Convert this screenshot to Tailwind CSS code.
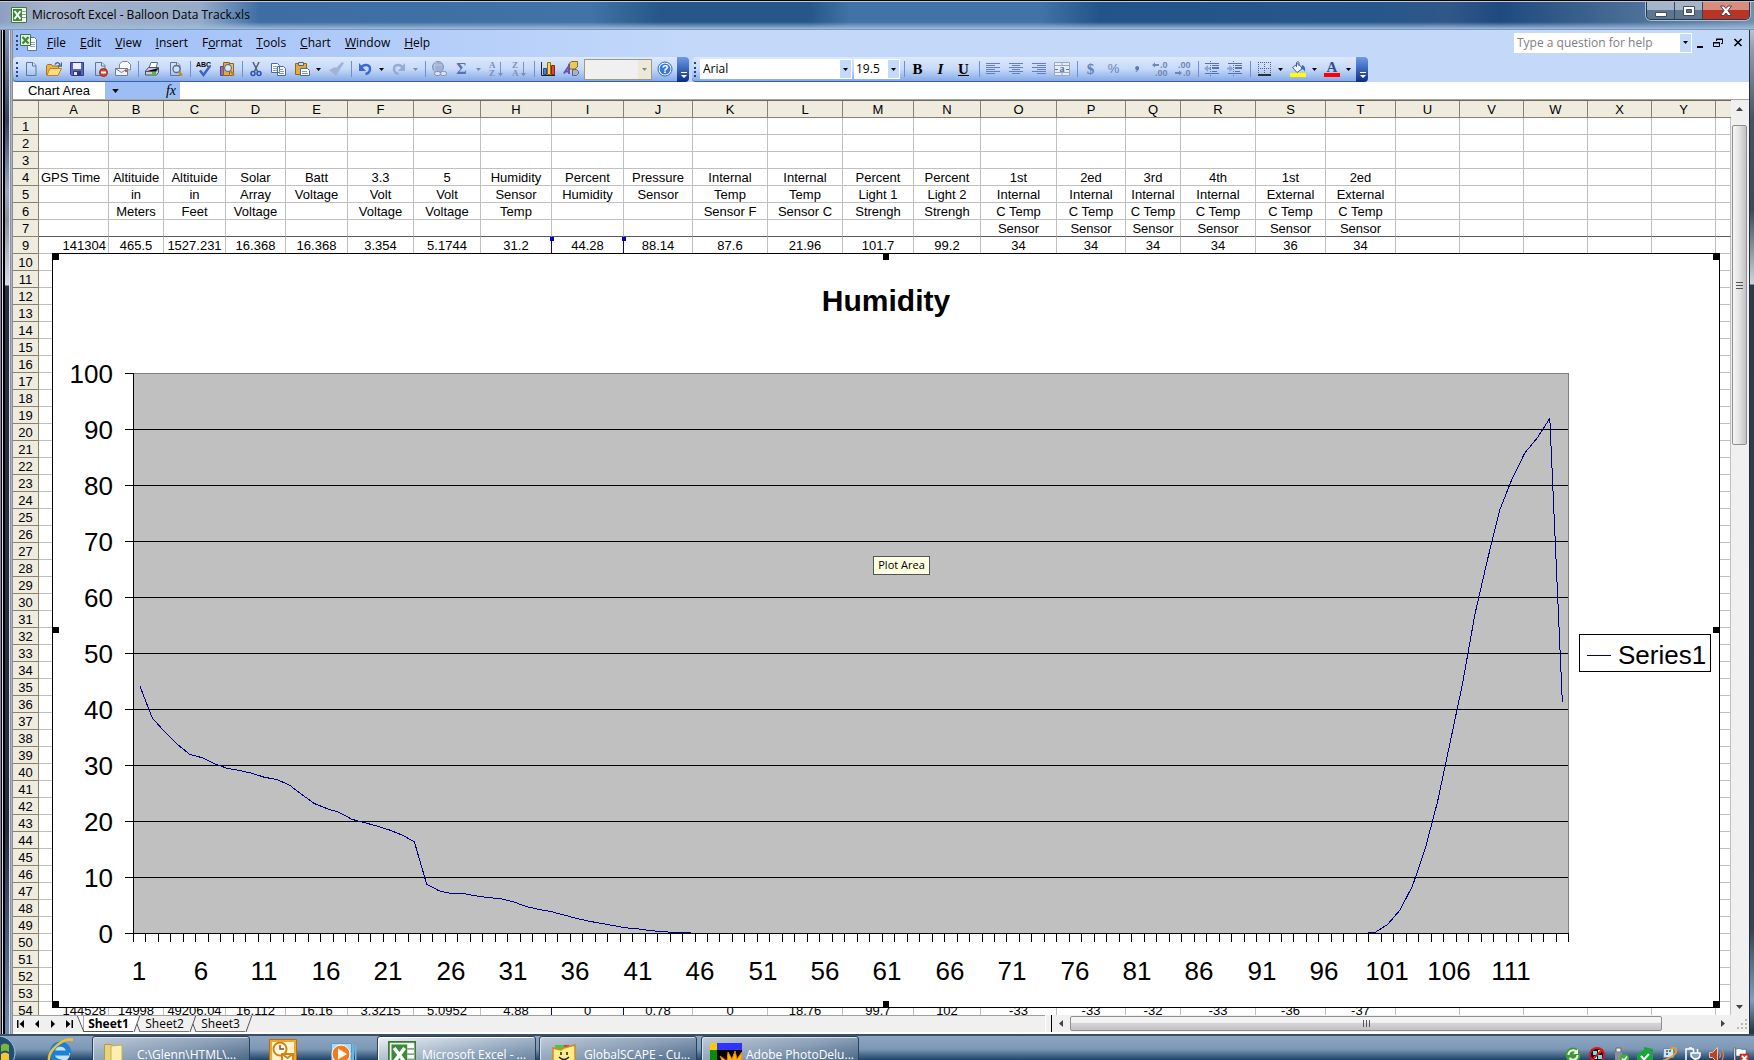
<!DOCTYPE html>
<html lang="en">
<head>
<meta charset="utf-8">
<title>Microsoft Excel - Balloon Data Track.xls</title>
<script src="https://cdn.jsdelivr.net/npm/@tailwindcss/browser@4"></script>
</head>
<body class="h-screen overflow-hidden bg-[#24486f] font-['Open_Sans','Noto_Sans',sans-serif] text-xs text-black">
<svg class="hidden" aria-hidden="true">
  <defs>
    <linearGradient id="sheetFill" x1="0" y1="0" x2="1" y2="1"><stop offset="0" stop-color="#fff"/><stop offset="1" stop-color="#c9d8f0"/></linearGradient>
    <symbol id="xl" viewBox="0 0 16 16"><path fill="#e9f3e6" stroke="#3c7a38" d="M.5.5h15v15H.5z"/><path fill="#fff" d="M10 2h5v12h-5z"/><path stroke="#7fae7b" d="M11 4.500h4M11 7.500h4M11 10.500h4"/><path fill="#3d8b3a" d="M2 2h9v12H2z"/><path stroke="#fff" stroke-width="2" d="M3.500 4l6 8M9.500 4l-6 8"/></symbol>
    <symbol id="caret" viewBox="0 0 5 3"><path d="M0 0h5L2.500 3z"/></symbol>
    <symbol id="page" viewBox="0 0 16 16"><path fill="url(#sheetFill)" stroke="#5f769f" d="M3.500 1.500h6.500l3 3v10h-9.500z"/><path fill="#dfe8f7" stroke="#5f769f" d="M9.500 1.500v3.500h3.500"/></symbol>
  </defs>
</svg>
<div class="flex h-full flex-col">
  <!-- Application window -->
  <div class="flex min-h-0 flex-1 flex-col border-t border-black">
    <header class="flex h-[29px] shrink-0 items-start justify-between border-t border-[#b9cfe4] bg-[linear-gradient(to_bottom,transparent_20px,#9dbbdc_27px,#5a7388_28px),linear-gradient(to_right,#8f9fc0_0,#a5b3ca_50px,#95abc9_200px,#3d6da3_260px,#4173a6_590px,#265788_660px,#265788_810px,#4173a6_850px,#4173a6_1040px,#235489_1100px,#27578a_1380px,#305788_1450px,#1e4a7e_1500px,#7290ae_100%)] pl-[11px]">
      <div class="flex h-[26px] items-center gap-[5px]">
        <svg class="size-4"><use href="#xl"/></svg>
        <h1 class="text-[12px] leading-4">Microsoft Excel - Balloon Data Track.xls</h1>
      </div>
      <div class="mr-1 flex h-[18px] overflow-hidden rounded-b-[5px] border border-t-0 border-[#26384e] shadow-[0_0_0_1px_#a9bfd4]">
        <button aria-label="Minimize" class="flex w-7 items-center justify-center border-r border-[#33465d] bg-linear-to-b from-[#a3b5c6] from-50% to-[#5e7791] to-50%"><svg class="h-4 w-4" viewBox="0 0 16 16"><path fill="#fff" stroke="#454c5c" d="M2.500 9.500h11v4h-11z"/></svg></button>
        <button aria-label="Maximize" class="flex w-7 items-center justify-center border-r border-[#33465d] bg-linear-to-b from-[#a3b5c6] from-50% to-[#5e7791] to-50%"><svg class="h-4 w-4" viewBox="0 0 16 16"><path fill="#fff" stroke="#454c5c" fill-rule="evenodd" d="M2.500 3.500h11v9h-11zM5.500 6.500h5v3h-5z"/></svg></button>
        <button aria-label="Close" class="flex w-[46px] items-center justify-center bg-linear-to-b from-[#d98c7e] from-50% to-[#b93422] to-50%"><svg class="h-4 w-4" viewBox="0 0 16 16"><path fill="#fff" stroke="#4c4450" d="M2.500 3h3.500l2 2.500L10 3h3.500L10 7.700 13.500 12.500H10L8 10 6 12.500H2.500L6 7.700z"/></svg></button>
      </div>
    </header>
    <div class="flex min-h-0 flex-1">
      <div class="w-[13px] shrink-0 bg-[linear-gradient(to_right,#889_1px,#0a0a10_1px,#0a0a10_2px,#dde_2px,#dde_3px,#000_3px,#000_5px,transparent_5px,transparent_9px,#dde6ee_9px,#dde6ee_10px,#555a66_10px,#c3c9d4_11px,#777a80_13px),linear-gradient(to_bottom,#7f94b4_0,#33415d_90px,#9aaac0_160px,#8b93a0_190px,#d9dce2_255px,#2a3044_256px,#262c40_800px,#6b89b0_1000px)]"></div>
      <div class="flex min-w-0 flex-1 flex-col">
        <!-- Menu bar -->
        <div class="flex h-[27px] shrink-0 items-center justify-between bg-linear-to-r from-[#9dbdf7] to-[#c4d9fa] to-40% pr-1 pb-[2px] pl-[3px]">
          <nav class="flex items-center">
            <span class="mr-[2px] h-[15px] border-l-2 border-dotted border-[#27418a]"></span>
            <svg class="mr-[2px] h-[18px] w-[18px]" viewBox="0 0 18 18"><path fill="#fff" stroke="#5f769f" d="M7.500 3.500h7l2 2v11h-9z"/><path stroke="#8ea6d0" d="M10 8.500h5M10 10.500h5M10 12.500h5"/><path fill="#e6f2e2" stroke="#3c7a38" d="M.5.500h10v11H.5z"/><path stroke="#3d8b3a" stroke-width="2.200" d="M2.500 3l6 6.500M8.500 3l-6 6.500"/></svg>
            <div class="flex">
              <button class="px-[7px]"><u>F</u>ile</button><button class="px-[7px]"><u>E</u>dit</button><button class="px-[7px]"><u>V</u>iew</button><button class="px-[7px]"><u>I</u>nsert</button><button class="px-[7px]">F<u>o</u>rmat</button><button class="px-[7px]"><u>T</u>ools</button><button class="px-[7px]"><u>C</u>hart</button><button class="px-[7px]"><u>W</u>indow</button><button class="px-[7px]"><u>H</u>elp</button>
            </div>
          </nav>
          <div class="flex items-center">
            <div class="flex h-5 w-[178px] items-stretch bg-white p-px"><input aria-label="Type a question for help" placeholder="Type a question for help" class="min-w-0 flex-1 pl-[2px] placeholder:text-[#808080]"><button aria-label="Show questions" class="flex w-[11px] items-center justify-center bg-[#c4dafa]"><svg class="h-[3px] w-[5px]"><use href="#caret"/></svg></button></div>
            <button aria-label="Minimize workbook" class="ml-[5px] w-3"><svg class="h-3 w-3" viewBox="0 0 12 12"><path fill="#000" d="M0 9h6v2H0z"/></svg></button>
            <button aria-label="Restore workbook" class="ml-1 w-3"><svg class="h-3 w-3" viewBox="0 0 12 12" fill="none" stroke="#000"><path d="M3.500 4V2.500h6v4H8M3 2h7M.5 5.500h6v4h-6zM0 6h7"/></svg></button>
            <button aria-label="Close workbook" class="ml-2 w-3"><svg class="h-3 w-3" viewBox="0 0 12 12"><path stroke="#000" stroke-width="1.600" d="M1.500 2l7 7M8.500 2l-7 7"/></svg></button>
          </div>
        </div>
        <!-- Toolbars -->
        <div class="flex h-[25px] shrink-0 bg-linear-to-r from-[#9dbdf7] to-[#c4d9fa] to-40%">
          <div class="flex items-center rounded-l-sm border-b border-[#3b61a6] bg-linear-to-b from-[#dde9fd] via-[#c6d9f8] to-[#86aae6] pr-px pl-[3px]" role="toolbar" aria-label="Standard">
            <span class="mr-px h-[15px] border-l-2 border-dotted border-[#27418a]"></span>
            <button aria-label="New" class="flex w-[23px] justify-center"><svg class="size-4"><use href="#page"/></svg></button>
            <button aria-label="Open" class="flex w-[23px] justify-center"><svg class="size-4" viewBox="0 0 16 16"><path fill="#e9b44c" stroke="#a8741a" d="M.5 14V4.500l1-1h4l1 1.500h6V8"/><path fill="#fbdc82" stroke="#b98425" d="M.8 14.500L4 7.500h11.500l-3.500 7z"/><path fill="none" stroke="#3f6291" stroke-width="1.300" d="M9 3.500C10.500 1 13 1 14 4M15.500 1.500V5H12"/></svg></button>
            <button aria-label="Save" class="flex w-[23px] justify-center"><svg class="size-4" viewBox="0 0 16 16"><path fill="#5a62c8" stroke="#343a8e" d="M1.500 1.500h13v13h-12l-1-1z"/><path fill="#eef1fb" d="M4 2h8v6H4z"/><path fill="#33386f" d="M4 10h8v4.500H4z"/><path fill="#e4e6f4" d="M5 11h3v3H5z"/></svg></button>
            <button aria-label="Permission" class="flex w-[23px] justify-center"><svg class="size-4"><use href="#page"/><circle cx="11.500" cy="11.500" r="4" fill="#d8432c" stroke="#9c2a18"/><path fill="#fff" d="M9 10.500h5v2H9z"/></svg></button>
            <button aria-label="E-mail" class="flex w-[23px] justify-center"><svg class="size-4" viewBox="0 0 16 16"><path fill="#fff" stroke="#7a89a8" d="M4.500 8V3l3-2.500h5l3 3V9z"/><path fill="#eef1f6" stroke="#6e7c99" d="M.5 7.500h12v7H.5z"/><path fill="none" stroke="#6e7c99" d="M.5 7.500l6 4 6-4"/><path fill="#d6542e" d="M10 9h2v2h-2z"/></svg></button>
            <span class="ml-1 mr-px h-4 border-l border-[#6d90cf]"></span>
            <button aria-label="Print" class="flex w-[23px] justify-center"><svg class="size-4" viewBox="0 0 16 16"><path fill="#fff" stroke="#5c6b88" d="M5 7l2-5.500h6.500L12 7z"/><path fill="#c9ced9" stroke="#4a5468" d="M1.500 10l3-3.500h10v5l-2 2.500h-11z"/><path stroke="#4a5468" d="M1.500 10.500h10.500l2.500-3.500"/><path fill="#49c23a" d="M8 11h4v3H8z"/></svg></button>
            <button aria-label="Print Preview" class="flex w-[23px] justify-center"><svg class="size-4"><use href="#page"/><circle cx="9.500" cy="8" r="3.500" fill="#cfe2f7" stroke="#5b6a80" stroke-width="1.300"/><path stroke="#c88928" stroke-width="2.500" d="M12 11l3 3.500"/></svg></button>
            <span class="ml-1 mr-px h-4 border-l border-[#6d90cf]"></span>
            <button aria-label="Spelling" class="flex w-[23px] justify-center"><svg class="size-4 overflow-visible" viewBox="0 0 16 16"><text x="0" y="6" font-family="Liberation Sans" font-size="7" font-weight="700">ABC</text><path fill="none" stroke="#3c63c4" stroke-width="2.500" d="M4 9.500l3.500 4.500L14 5"/></svg></button>
            <button aria-label="Research" class="flex w-[23px] justify-center"><svg class="size-4" viewBox="0 0 16 16"><path fill="#8b6cc6" stroke="#574089" d="M1.500 5.500h3v9h-3z"/><path fill="#dca94e" stroke="#8c6420" d="M4.500 1.500h6v13h-6z"/><path fill="#e4c47a" stroke="#8c6420" d="M10.500 2.500h4v12h-4z"/><circle cx="9" cy="7" r="3.500" fill="#d7e8fa" stroke="#51617c"/><path stroke="#c47f1e" stroke-width="2.500" d="M11.500 10l3.500 4.500"/></svg></button>
            <span class="ml-1 mr-px h-4 border-l border-[#6d90cf]"></span>
            <button aria-label="Cut" class="flex w-[23px] justify-center"><svg class="size-4" viewBox="0 0 16 16" fill="none"><path stroke="#4f5f7c" stroke-width="1.500" d="M5 1l4.500 9.500M11 1L6.500 10.500"/><circle cx="5" cy="12.500" r="2" stroke="#2b50b4" stroke-width="1.500"/><circle cx="11" cy="12.500" r="2" stroke="#2b50b4" stroke-width="1.500"/></svg></button>
            <button aria-label="Copy" class="flex w-[23px] justify-center"><svg class="size-4" viewBox="0 0 16 16"><path fill="#fff" stroke="#4969ab" d="M.5 2.500h6l2 2v7h-8zM6.500 5.500h6l2 2v7h-8z"/><path stroke="#7e9bd4" d="M2 5.500h4M2 7.500h4M2 9.500h4M8 8.500h4M8 10.500h5M8 12.500h5"/></svg></button>
            <button aria-label="Paste" class="flex w-[23px] justify-center"><svg class="size-4" viewBox="0 0 16 16"><path fill="#e2ac3c" stroke="#94681a" d="M1.500 2.500h11v11h-11z"/><path fill="#d6dbe6" stroke="#5a6272" d="M4.500 1.500h5v3h-5z"/><path fill="#fff" stroke="#4969ab" d="M6.500 7.500h7l2 2v5h-9z"/><path stroke="#7e9bd4" d="M8 10.500h5M8 12.500h6"/></svg></button>
            <button aria-label="Paste options" class="flex w-[11px] justify-center"><svg class="h-[3px] w-[5px]"><use href="#caret"/></svg></button>
            <button aria-label="Format Painter" class="flex w-[23px] justify-center"><svg class="size-4" viewBox="0 0 16 16"><path fill="#a3b3d3" d="M14 1l2 1-5 8-3-3zM7 6l4 4-3 5-7-6z"/></svg></button>
            <span class="ml-1 mr-px h-4 border-l border-[#6d90cf]"></span>
            <button aria-label="Undo" class="flex w-[23px] justify-center"><svg class="size-4" viewBox="0 0 16 16"><path fill="none" stroke="#3a6bd0" stroke-width="2.500" d="M4 7C6 3 13 2.500 13 8c0 3-2 4.500-4.500 5"/><path fill="#3a6bd0" d="M2 2v8h7z"/></svg></button>
            <button aria-label="Undo history" class="flex w-[11px] justify-center"><svg class="h-[3px] w-[5px]"><use href="#caret"/></svg></button>
            <button aria-label="Redo" class="flex w-[23px] justify-center"><svg class="size-4" viewBox="0 0 16 16"><path fill="none" stroke="#95abd2" stroke-width="2.500" d="M12 7C10 3 3 2.500 3 8c0 3 2 4.500 4.500 5"/><path fill="#95abd2" d="M14 2v8H7z"/></svg></button>
            <button aria-label="Redo history" class="flex w-[11px] justify-center"><svg class="h-[3px] w-[5px] fill-[#7f8ca6]"><use href="#caret"/></svg></button>
            <span class="ml-1 mr-px h-4 border-l border-[#6d90cf]"></span>
            <button aria-label="Insert Hyperlink" class="flex w-[23px] justify-center"><svg class="size-4" viewBox="0 0 16 16"><circle cx="7" cy="6" r="5.500" fill="#9fb1d4" stroke="#8094bd"/><path fill="none" stroke="#bccae6" d="M3 4h8M5 1c-2 3-2 7 0 10"/><rect x="3.500" y="10.500" width="6" height="4" rx="2" fill="#d8e2f4" stroke="#7f90b4"/><rect x="9.500" y="10.500" width="6" height="4" rx="2" fill="#d8e2f4" stroke="#7f90b4"/></svg></button>
            <button aria-label="AutoSum" class="w-[23px] text-center font-['Liberation_Serif',serif] text-base leading-5 font-bold text-[#5873ab]">Σ</button>
            <button aria-label="AutoSum options" class="flex w-[11px] justify-center"><svg class="h-[3px] w-[5px] fill-[#7f8ca6]"><use href="#caret"/></svg></button>
            <button aria-label="Sort Ascending" class="flex w-[23px] justify-center"><svg class="size-4 overflow-visible" viewBox="0 0 16 16" fill="#7b90bd"><text x="1" y="7" font-family="Liberation Serif" font-size="9" font-weight="700">A</text><text x="1" y="15" font-family="Liberation Serif" font-size="9" font-weight="700">Z</text><path d="M12 1h1v11h2l-2.500 3.500L10 12h2z"/></svg></button>
            <button aria-label="Sort Descending" class="flex w-[23px] justify-center"><svg class="size-4 overflow-visible" viewBox="0 0 16 16" fill="#7b90bd"><text x="1" y="7" font-family="Liberation Serif" font-size="9" font-weight="700">Z</text><text x="1" y="15" font-family="Liberation Serif" font-size="9" font-weight="700">A</text><path d="M12 1h1v11h2l-2.500 3.500L10 12h2z"/></svg></button>
            <span class="ml-1 mr-px h-4 border-l border-[#6d90cf]"></span>
            <button aria-label="Chart Wizard" class="flex w-[23px] justify-center"><svg class="size-4" viewBox="0 0 16 16"><path fill="none" stroke="#222" d="M1.500 1v13.500H15"/><path fill="#3f7fe0" stroke="#234a8c" d="M3.500 7.500h3v6h-3z"/><path fill="#ffd83c" stroke="#8c6b10" d="M7.500 1.500h3v12h-3z"/><path fill="#e04a2c" stroke="#8a2412" d="M11.500 4.500h3v9h-3z"/></svg></button>
            <button aria-label="Drawing" class="flex w-[23px] justify-center"><svg class="size-4" viewBox="0 0 16 16"><path fill="#ecc75a" stroke="#8e6c1c" d="M5.500 3l3-2.500h6V6l-3 2h-6z"/><path fill="#a9b2c4" stroke="#5a6578" d="M9.500 8.500h4l2 2v2l-2 2h-4z"/><path fill="none" stroke="#6a50b8" stroke-width="2" d="M.8 12.500L6 5v8M2.500 10.500H6"/></svg></button>
            <div class="ml-[2px] mr-px flex h-[21px] w-[68px] border border-[#9b9a84] bg-[#f0f0f0]"><select disabled aria-label="Zoom" class="min-w-0 flex-1 appearance-none"></select><span class="flex w-[13px] items-center justify-center bg-[#ece9d8]"><svg class="h-[3px] w-[5px] fill-[#8a8878]"><use href="#caret"/></svg></span></div>
            <button aria-label="Help" class="flex w-[23px] justify-center"><svg class="size-4" viewBox="0 0 16 16"><circle cx="8" cy="8" r="7" fill="#fff" stroke="#2d62c4"/><circle cx="8" cy="8" r="5.500" fill="#3a78dc"/><text x="8" y="12" text-anchor="middle" fill="#fff" font-family="Liberation Sans" font-size="11" font-weight="700">?</text></svg></button>
          </div>
          <button aria-label="Standard toolbar options" class="flex w-3 items-end justify-center rounded-r-sm bg-linear-to-b from-[#6f9ae8] to-[#0a2d84] pb-[3px]"><svg class="h-[7px] w-[7px]" viewBox="0 0 7 7"><path fill="#fff" d="M1 0h6v1H1zM1 3h6L4 6z"/></svg></button>
          <div class="ml-[3px] flex items-center rounded-l-sm border-b border-[#3b61a6] bg-linear-to-b from-[#dde9fd] via-[#c6d9f8] to-[#86aae6] pr-[2px] pl-[2px]" role="toolbar" aria-label="Formatting">
            <span class="mr-1 h-[15px] border-l-2 border-dotted border-[#27418a]"></span>
            <div class="mr-[2px] flex h-5 w-[152px] bg-white p-px"><select aria-label="Font" class="min-w-0 flex-1 appearance-none pl-[2px] leading-4"><option>Arial</option></select><span class="flex w-[11px] items-center justify-center bg-[#c4dafa]"><svg class="h-[3px] w-[5px]"><use href="#caret"/></svg></span></div>
            <div class="flex h-5 w-[46px] bg-white p-px"><select aria-label="Font size" class="min-w-0 flex-1 appearance-none pl-px leading-4"><option>19.5</option></select><span class="flex w-[11px] items-center justify-center bg-[#c4dafa]"><svg class="h-[3px] w-[5px]"><use href="#caret"/></svg></span></div>
            <span class="ml-1 mr-px h-4 border-l border-[#6d90cf]"></span>
            <button aria-label="Bold" class="w-[23px] text-center font-['Liberation_Serif',serif] text-[15px] leading-4 font-bold">B</button>
            <button aria-label="Italic" class="w-[23px] text-center font-['Liberation_Serif',serif] text-[15px] leading-4 font-bold italic">I</button>
            <button aria-label="Underline" class="w-[23px] text-center font-['Liberation_Serif',serif] text-[15px] leading-4 font-bold underline">U</button>
            <span class="ml-1 mr-px h-4 border-l border-[#6d90cf]"></span>
            <button aria-label="Align Left" class="flex w-[23px] justify-center"><svg class="size-4" viewBox="0 0 16 16" stroke="#6580b8"><path d="M1 2.500h14M1 4.500h9M1 6.500h14M1 8.500h9M1 10.500h14M1 12.500h9"/></svg></button>
            <button aria-label="Center" class="flex w-[23px] justify-center"><svg class="size-4" viewBox="0 0 16 16" stroke="#6580b8"><path d="M1 2.500h14M4 4.500h8M1 6.500h14M4 8.500h8M1 10.500h14M4 12.500h8"/></svg></button>
            <button aria-label="Align Right" class="flex w-[23px] justify-center"><svg class="size-4" viewBox="0 0 16 16" stroke="#6580b8"><path d="M1 2.500h14M6 4.500h9M1 6.500h14M6 8.500h9M1 10.500h14M6 12.500h9"/></svg></button>
            <button aria-label="Merge and Center" class="flex w-[23px] justify-center"><svg class="size-4" viewBox="0 0 16 16"><path fill="#e6edf8" stroke="#9aa7c4" d="M.5 1.500h15v13H.5zM.5 4.500h15M.5 11.500h15M8 1.500v3M8 11.500v3"/><text x="8" y="11" text-anchor="middle" fill="#5873ab" font-family="Liberation Serif" font-size="10" font-weight="700">a</text><path stroke="#5873ab" d="M1 8.500h3M12 8.500h3"/></svg></button>
            <span class="ml-1 mr-px h-4 border-l border-[#6d90cf]"></span>
            <button aria-label="Currency Style" class="w-[23px] text-center font-['Liberation_Serif',serif] text-[15px] leading-4 font-bold text-[#6580b8]">$</button>
            <button aria-label="Percent Style" class="w-[23px] text-center font-['Liberation_Sans',sans-serif] text-[13px] leading-4 text-[#6580b8]">%</button>
            <button aria-label="Comma Style" class="flex w-[23px] justify-center"><svg class="size-4" viewBox="0 0 16 16"><path fill="#5f7ab4" d="M8 5c3 0 3 4-1 6l-.5-.6C8 9.500 8 9 7.500 9 5.500 8.500 6 5 8 5z"/></svg></button>
            <button aria-label="Increase Decimal" class="flex w-[23px] justify-center"><svg class="size-4 overflow-visible" viewBox="0 0 16 16" fill="#6f86b6" font-family="Liberation Sans" font-size="9" font-weight="700"><text x="8" y="7">.0</text><text x="3" y="15">.00</text><path d="M0 4l3-2.500V3h4v2H3v1.500z"/></svg></button>
            <button aria-label="Decrease Decimal" class="flex w-[23px] justify-center"><svg class="size-4 overflow-visible" viewBox="0 0 16 16" fill="#6f86b6" font-family="Liberation Sans" font-size="9" font-weight="700"><text x="3" y="7">.00</text><text x="8" y="15">.0</text><path d="M7 12l-3-2.500V11H0v2h4v1.500z"/></svg></button>
            <span class="ml-1 mr-px h-4 border-l border-[#6d90cf]"></span>
            <button aria-label="Decrease Indent" class="flex w-[23px] justify-center"><svg class="size-4" viewBox="0 0 16 16"><path stroke="#5873ab" d="M1 2.500h14M8 4.500h7M8 10.500h5M1 12.500h14"/><path stroke="#5873ab" stroke-width="2" d="M8 7h7"/><path fill="#8fa5d0" d="M0 7.500L4 4v2.500h3v2H4V11z"/><path stroke="#5873ab" stroke-dasharray="1 1" d="M6.500 0v16"/></svg></button>
            <button aria-label="Increase Indent" class="flex w-[23px] justify-center"><svg class="size-4" viewBox="0 0 16 16"><path stroke="#5873ab" d="M1 2.500h14M8 4.500h7M8 10.500h5M1 12.500h14"/><path stroke="#5873ab" stroke-width="2" d="M8 7h7"/><path fill="#8fa5d0" d="M6 7.500L2.500 4v2.500H0v2h2.500V11z"/><path stroke="#5873ab" stroke-dasharray="1 1" d="M6.500 0v16"/></svg></button>
            <span class="ml-1 mr-px h-4 border-l border-[#6d90cf]"></span>
            <button aria-label="Borders" class="flex w-[23px] justify-center"><svg class="size-4" viewBox="0 0 16 16" fill="none"><path stroke="#4a6092" stroke-dasharray="1 1" d="M2 1.500h13M2 7.500h13M2.500 1v12M8.500 1v12M14.500 1v12"/><path stroke="#000" stroke-width="1.500" d="M2 14h13"/></svg></button>
            <button aria-label="Border options" class="flex w-[11px] justify-center"><svg class="h-[3px] w-[5px]"><use href="#caret"/></svg></button>
            <button aria-label="Fill Color" class="flex w-[23px] justify-center"><svg class="size-4" viewBox="0 0 16 16"><path fill="#eef3fb" stroke="#4b5f85" d="M2.500 6.500L8 2.500l4.500 5L7 11.500z"/><path fill="none" stroke="#4b5f85" d="M6.500 6V1.500q1.500-2 2.500 0V5"/><path fill="#3c6ac0" d="M12 4q4 1 3 7-1-3-4-3z"/><path fill="#ff0" d="M0 12h16v4H0z"/></svg></button>
            <button aria-label="Fill color options" class="flex w-[11px] justify-center"><svg class="h-[3px] w-[5px]"><use href="#caret"/></svg></button>
            <button aria-label="Font Color" class="flex w-[23px] justify-center"><svg class="size-4 overflow-visible" viewBox="0 0 16 16"><text x="8" y="11" text-anchor="middle" fill="#2d4f96" font-family="Liberation Serif" font-size="15" font-weight="700">A</text><path fill="#f00" d="M0 12h16v4H0z"/></svg></button>
            <button aria-label="Font color options" class="flex w-[11px] justify-center"><svg class="h-[3px] w-[5px]"><use href="#caret"/></svg></button>
          </div>
          <button aria-label="Formatting toolbar options" class="flex w-3 items-end justify-center rounded-r-sm bg-linear-to-b from-[#6f9ae8] to-[#0a2d84] pb-[3px]"><svg class="h-[7px] w-[7px]" viewBox="0 0 7 7"><path fill="#fff" d="M1 0h6v1H1zM1 3h6L4 6z"/></svg></button>
        </div>
        <!-- Formula bar -->
        <div class="flex h-[18px] shrink-0 border-b border-[#a5a79c] bg-[#9dbdf7] font-['Liberation_Sans',sans-serif] text-[13px]">
          <input aria-label="Name Box" value="Chart Area" class="w-[92px] bg-white text-center">
          <button aria-label="Names" class="flex w-5 items-center justify-center"><svg class="h-[4px] w-[7px]" viewBox="0 0 5 3"><use href="#caret"/></svg></button>
          <button aria-label="Insert Function" class="ml-auto w-3 font-['Liberation_Serif',serif] text-sm leading-4 italic">fx</button>
          <input aria-label="Formula" class="ml-[3px] w-[calc(100%-167px)] bg-white">
        </div>
        <!-- Worksheet -->
        <div class="flex min-h-0 flex-1 bg-[#f0f0f0]">
          <div class="relative min-w-0 flex-1 overflow-hidden border-t border-[#6c6a5c] bg-white">
            <table class="w-full table-fixed border-separate border-spacing-0 font-['Liberation_Sans',sans-serif] text-[13px] leading-[15px]">
              <colgroup id="cols"></colgroup>
              <thead id="head"></thead>
              <tbody id="rows"></tbody>
            </table>
            <!-- Embedded chart -->
            <div class="absolute top-[152px] right-[11px] left-[39px]">
              <svg id="chart" class="block w-full bg-white" viewBox="0 0 1668 755" font-family="Liberation Sans, Arial, sans-serif" font-size="26" role="img" aria-label="Humidity chart"></svg>
            </div>
          </div>
          <div class="flex w-[18px] flex-col items-center bg-[#f0f0f0] pl-px pr-[2px]">
            <button aria-label="Scroll up" class="flex h-[25px] w-full items-center justify-center pb-2"><svg class="h-[4px] w-[7px]" viewBox="0 0 7 4"><path fill="#444" d="M3.500 0L7 4H0z"/></svg></button>
            <div class="flex h-80 w-[15px] flex-col items-center justify-center gap-[2px] rounded-[2px] border border-[#8f8f8f] bg-linear-to-r from-[#f6f6f6] via-[#e2e2e4] to-[#c2c2c6]"><span class="h-px w-[7px] bg-[#555]"></span><span class="h-px w-[7px] bg-[#555]"></span><span class="h-px w-[7px] bg-[#555]"></span></div>
            <button aria-label="Scroll down" class="mt-auto flex h-4 w-full items-center justify-center"><svg class="h-[4px] w-[7px]" viewBox="0 0 7 4"><path fill="#444" d="M0 0h7L3.500 4z"/></svg></button>
          </div>
        </div>
        <!-- Sheet tabs and horizontal scroll bar -->
        <div class="flex h-[19px] shrink-0 border-b-2 border-white bg-[#f0f0f0]">
          <div class="flex flex-1 border-t border-[#a0a0a0]">
            <button aria-label="First sheet" class="flex w-4 items-center justify-center"><svg class="h-2 w-2" viewBox="0 0 8 8"><path d="M0 0h1.500v8H0zM7 0v8L2.500 4z"/></svg></button>
            <button aria-label="Previous sheet" class="flex w-4 items-center justify-center"><svg class="h-2 w-2" viewBox="0 0 8 8"><path d="M6 0v8L2 4z"/></svg></button>
            <button aria-label="Next sheet" class="flex w-4 items-center justify-center"><svg class="h-2 w-2" viewBox="0 0 8 8"><path d="M2 0v8l4-4z"/></svg></button>
            <button aria-label="Last sheet" class="flex w-4 items-center justify-center"><svg class="h-2 w-2" viewBox="0 0 8 8"><path d="M1 0v8l4.500-4zM6.500 0H8v8H6.500z"/></svg></button>
            <div class="flex items-stretch leading-[15px]">
              <svg class="h-4 w-[7px]" viewBox="0 0 7 16"><path fill="#fff" stroke="#555" d="M0-1l7 17V-1"/></svg>
              <button class="w-[49px] border-b border-[#555] bg-white text-center text-[12px] font-bold">Sheet1</button>
              <svg class="h-4 w-[7px]" viewBox="0 0 7 16"><path fill="#fff" d="M0 0h7L1 16H0z"/><path fill="none" stroke="#555" d="M7-1L1 16M4 8l3 8"/></svg>
              <button class="w-[49px] border-b border-[#777] text-center">Sheet2</button>
              <svg class="h-4 w-[7px]" viewBox="0 0 7 16"><path fill="none" stroke="#555" d="M7-1L1 16M4 8l3 8"/></svg>
              <button class="w-[49px] border-b border-[#777] text-center">Sheet3</button>
              <svg class="h-4 w-[7px]" viewBox="0 0 7 16"><path fill="none" stroke="#555" d="M7-1L1 16"/></svg>
            </div>
          </div>
          <div class="flex w-[40.550%] items-center">
            <span class="h-full w-[7px] border-r border-l border-r-black border-l-white bg-[#f0f0f0]"></span>
            <button aria-label="Scroll left" class="flex w-[18px] justify-center"><svg class="h-[7px] w-1" viewBox="0 0 4 7"><path fill="#444" d="M4 0v7L0 3.500z"/></svg></button>
            <div class="mr-[53px] flex h-[15px] flex-1 items-center justify-center gap-[2px] rounded-[2px] border border-[#8f8f8f] bg-linear-to-b from-[#f3f3f3] from-40% via-[#d5d5d8] to-[#c2c2c6]"><span class="h-[7px] w-px bg-[#555]"></span><span class="h-[7px] w-px bg-[#555]"></span><span class="h-[7px] w-px bg-[#555]"></span></div>
            <button aria-label="Scroll right" class="flex w-4 justify-center"><svg class="h-[7px] w-1" viewBox="0 0 4 7"><path fill="#444" d="M0 0v7l4-3.500z"/></svg></button>
            <svg class="ml-[5px] h-3 w-[13px]" viewBox="0 0 13 12"><path fill="#b8b8b8" d="M9 1h2v2H9zM9 5h2v2H9zM5 5h2v2H5zM9 9h2v2H9zM5 9h2v2H5zM1 9h2v2H1z"/></svg>
          </div>
        </div>
      </div>
      <div class="w-[5px] shrink-0 border-l border-[#22303c] bg-[linear-gradient(to_bottom,#b5c4d4_0,#8d9cab_20px,#45525f_90px,#3b4956_180px,#d0d5da_254px,#2a3a47_255px,#34434f_900px,#7c9fc4_970px,#2a3a47_1000px)]"></div>
    </div>
  </div>
  <!-- Windows taskbar -->
  <footer class="flex h-[26px] shrink-0 overflow-hidden border-t-2 border-[#3a5064] bg-linear-to-b from-[#8ba3c0] from-10% via-[#7c97b5] via-55% to-[#1f4468] text-xs text-white">
    <div class="flex w-[92px] shrink-0 justify-between pr-[18px]">
      <button aria-label="Start" class="h-6 w-4 overflow-hidden"><svg class="h-6 w-4" viewBox="0 0 16 24"><circle cx="-2" cy="17" r="17" fill="#244c74" stroke="#9ccbe8"/><path fill="#e4572c" d="M0 9q-1-2-4 0v8h4z"/><path fill="#7ab83a" d="M1 9q4-3 8 0v7q-4-3-8 0z"/><path fill="#f5c830" d="M1 18q4-3 8 0v6H1z"/></svg></button>
      <button aria-label="Internet Explorer"><svg class="h-6 w-7" viewBox="0 0 28 24"><circle cx="14" cy="17" r="10" fill="#bfe2fa"/><path fill="none" stroke="#1f7fd0" stroke-width="5" d="M23 17H8M23 17q-1-9-9-9-8 1-8 10 1 7 9 8"/><path fill="none" stroke="#f2c230" stroke-width="2.500" d="M3 24C2 14 18 1 27 4"/></svg></button>
    </div>
    <button class="flex h-[30px] w-[158px] shrink-0 items-center rounded-t-[3px] border border-[#2b3f55] bg-linear-to-br from-[#c0ccda] via-[#899db5] to-[#3f5f80] pt-2 pl-[10px] shadow-[inset_1px_1px_0_#d8e2ee]"><svg class="mr-[10px] h-6 w-6 shrink-0" viewBox="0 0 24 24"><path fill="#e9d27c" stroke="#b79a44" d="M1.500 1.500h7l2 2H14V24H1.500z"/><path fill="#fbeeb0" stroke="#c8ac55" d="M8 3l11-1v22l-11 1z"/></svg><span class="whitespace-nowrap">C:\Glenn\HTML\...</span></button>
    <button aria-label="Outlook" class="ml-[19px] shrink-0"><svg class="h-6 w-7" viewBox="0 -3 28 24"><path fill="#f5a623" stroke="#b86e0c" d="M.5.500h27V24H.5z"/><path fill="#fff2d0" d="M3 3h22v21H3z"/><circle cx="11" cy="10" r="6.500" fill="#fff8e6" stroke="#d18414" stroke-width="2"/><path fill="none" stroke="#8a5206" stroke-width="1.500" d="M11 6v4h4"/><path fill="#fff" stroke="#d18414" stroke-width="2" d="M13 15h11v8H13zl5.500 4 5.500-4"/></svg></button>
    <button aria-label="Windows Media Player" class="ml-[34px] shrink-0"><svg class="h-6 w-[26px]" viewBox="0 -7 26 24"><path fill="#a9d8f2" stroke="#5a9cc8" d="M.5.500h20V20H.5z"/><path fill="#6cb4e0" d="M21 1h2v18h-2zM24 2h1.500v17H24z"/><circle cx="10" cy="11" r="9" fill="#f47b20" stroke="#fff"/><path fill="#fff" d="M7 5.500v11l9-5.500z"/></svg></button>
    <button class="ml-5 flex h-[30px] w-[159px] shrink-0 items-center rounded-t-[3px] border border-[#2b3f55] bg-linear-to-br from-[#eef2f6] via-[#a3b4c8] to-[#5d7a98] pt-2 pl-[10px] shadow-[inset_1px_1px_0_#fff]"><svg class="mr-[6px] h-7 w-7 shrink-0"><use href="#xl"/></svg><span class="whitespace-nowrap">Microsoft Excel - ...</span></button>
    <button class="ml-[3px] flex h-[30px] w-[158px] shrink-0 items-center rounded-t-[3px] border border-[#2b3f55] bg-linear-to-br from-[#c0ccda] via-[#899db5] to-[#3f5f80] pt-2 pl-3 shadow-[inset_1px_1px_0_#d8e2ee]"><svg class="mr-2 h-6 w-6 shrink-0" viewBox="0 0 24 24"><path fill="#54c43c" d="M3 2h9v6H3z"/><path fill="#d83a4a" d="M12 2h5v5h-5z"/><path fill="#ffec8a" stroke="#d08a20" stroke-width="1.500" d="M1 5l8 2 3-2 11-3v22H1z"/><path fill="none" stroke="#222" stroke-width="1.500" d="M9 9v3M15 9v3M7 14q5 5 10 0"/></svg><span class="whitespace-nowrap">GlobalSCAPE - Cu...</span></button>
    <button class="ml-1 flex h-[30px] w-[158px] shrink-0 items-center rounded-t-[3px] border border-[#2b3f55] bg-linear-to-br from-[#c0ccda] via-[#899db5] to-[#3f5f80] pt-2 pl-2 shadow-[inset_1px_1px_0_#d8e2ee]"><svg class="mr-1 h-8 w-8 shrink-0" viewBox="0 0 32 32"><path fill="#000" d="M0 4h32v28H0z"/><path fill="#ffc800" d="M0 4h7v7H0z"/><path fill="#3232ff" d="M7 4h25v7H7z"/><path fill="#0a8c0a" d="M0 11h7v21H0z"/><path fill="#ffb010" stroke="#e47c00" d="M7 22l6 2-3-7 7 5 1-9 4 7 3-8 2 8 5-7v19H7z"/></svg><span class="whitespace-nowrap">Adobe PhotoDelu...</span></button>
    <div class="mr-[5px] ml-auto flex shrink-0 gap-2 pt-[11px]">
      <svg class="size-4" viewBox="0 0 16 16"><circle cx="8" cy="8" r="7.500" fill="#3f9a35"/><path fill="none" stroke="#e8ffe0" stroke-width="2" d="M3.500 8a4.500 4.500 0 018-3M12.500 8a4.500 4.500 0 01-8 3"/><path fill="#fff" d="M13 2v5H8z"/></svg>
      <svg class="size-4" viewBox="0 0 16 16"><path fill="#111" d="M2 2h12v12H2z"/><path fill="#6ee0f0" d="M4 4h4v4H4zM9 8h4v4H9z"/><path fill="#ffe23c" d="M9 3h3v3H9z"/><path fill="#fff" d="M5 9h3v3H5z"/><circle cx="8" cy="8" r="7" fill="none" stroke="#e0141e" stroke-width="2"/><path stroke="#e0141e" stroke-width="2" d="M13 3L3 13"/></svg>
      <svg class="size-4" viewBox="0 0 16 16"><path fill="#eee" stroke="#666" d="M3 1h5v4H3z"/><path fill="#8c8f94" d="M2 5h7v11H2z"/><circle cx="11.500" cy="11.500" r="4.500" fill="#3fae35"/><path fill="none" stroke="#fff" stroke-width="1.500" d="M9 11.500l2 2 3-4"/></svg>
      <svg class="size-4" viewBox="0 0 16 16"><path fill="#17a53c" d="M0 7l7-4V0l9 2v3h-4l4 2v9H0z"/><path fill="none" stroke="#fff" stroke-width="2" d="M4 9l3 3.500L12 7"/></svg>
      <svg class="size-4" viewBox="0 0 16 16"><path fill="#cfe6fa" stroke="#5590cc" d="M2.500 1.500h10v9h-10z"/><path fill="#e04a2c" d="M5 3h2v2H5z"/><path fill="#3c9a34" d="M8 3h2v2H8z"/><path fill="#2d70d0" d="M5 6h2v2H5z"/><path fill="none" stroke="#f29a28" stroke-width="2" d="M9 2q7-3 6 3-2 5-14 9"/></svg>
      <svg class="size-4" viewBox="0 0 16 16" fill="none" stroke="#fff" stroke-width="1.500"><path d="M9 2H1v12h7M4 1h3"/><path fill="#8aa0b8" d="M6 6h9v3q-1 3-4 3t-5-3zM8.500 2v4M12.500 2v4M10.500 12v4"/></svg>
      <svg class="size-4" viewBox="0 0 16 16"><path fill="#b8442c" stroke="#f0c0a8" d="M.5 5.500h3l5-5v15l-5-5h-3z"/><path fill="none" stroke="#d8805c" stroke-width="1.300" d="M10.500 5q2 3 0 6M13 3q3 5 0 10"/></svg>
      <svg class="size-4" viewBox="0 0 16 16"><path fill="#fff" stroke="#444" stroke-width=".5" d="M1 1h1.500v15H1zM3 2q3-1 5 0t5 0v7H3z"/><path fill="#e03428" stroke="#8c1810" stroke-width=".5" d="M7 7h9v9H7z"/><path stroke="#fff" stroke-width="1.800" d="M9 9l5 5M14 9l-5 5"/></svg>
    </div>
  </footer>
</div>
<script>
  const letters = "ABCDEFGHIJKLMNOPQRSTUVWXY".split("");
  const widths = [26, 70, 55, 62, 60, 62, 66, 67, 71, 72, 69, 75, 75, 71, 67, 76, 69, 55, 75, 70, 70, 64, 64, 64, 64, 64];
  const data = {
    4: ["GPS Time", "Altituide", "Altituide", "Solar", "Batt", "3.3", "5", "Humidity", "Percent", "Pressure", "Internal", "Internal", "Percent", "Percent", "1st", "2ed", "3rd", "4th", "1st", "2ed"],
    5: ["", "in", "in", "Array", "Voltage", "Volt", "Volt", "Sensor", "Humidity", "Sensor", "Temp", "Temp", "Light 1", "Light 2", "Internal", "Internal", "Internal", "Internal", "External", "External"],
    6: ["", "Meters", "Feet", "Voltage", "", "Voltage", "Voltage", "Temp", "", "", "Sensor F", "Sensor C", "Strengh", "Strengh", "C Temp", "C Temp", "C Temp", "C Temp", "C Temp", "C Temp"],
    7: ["", "", "", "", "", "", "", "", "", "", "", "", "", "", "Sensor", "Sensor", "Sensor", "Sensor", "Sensor", "Sensor"],
    9: ["141304", "465.5", "1527.231", "16.368", "16.368", "3.354", "5.1744", "31.2", "44.28", "88.14", "87.6", "21.96", "101.7", "99.2", "34", "34", "34", "34", "36", "34"],
    54: ["144528", "14998", "49206.04", "16.112", "16.16", "3.3215", "5.0952", "4.88", "0", "0.78", "0", "18.76", "99.7", "102", "-33", "-33", "-32", "-33", "-36", "-37"]
  };
  document.getElementById("cols").innerHTML = widths.map(w => `<col style="width:${w}px">`).join("") + "<col>";
  const headCell = "h-[17px] border-r border-b border-[#87836c] bg-[#efebde] p-0 pt-px text-center font-normal";
  document.getElementById("head").innerHTML = `<tr><th class="${headCell}"></th>` + letters.map(l => `<th scope="col" class="${headCell}">${l}</th>`).join("") + `<th class="h-[17px] border-b border-[#87836c] bg-[#efebde] p-0"></th></tr>`;

  const plain = "relative h-[17px] border-r border-b border-[#c0c0c0] p-0 pt-px text-center whitespace-nowrap";
  const frozen = "relative h-[17px] border-r border-b border-r-[#c0c0c0] border-b-[#5a5a5a] p-0 pt-px text-center whitespace-nowrap";
  const range = "relative h-[17px] border-r border-b border-r-[#0000c8] border-b-[#c0c0c0] p-0 pt-px text-center whitespace-nowrap";
  const left = "relative h-[17px] border-r border-b border-[#c0c0c0] p-0 pt-px pl-[2px] text-left whitespace-nowrap";
  const right = "relative h-[17px] border-r border-b border-[#c0c0c0] p-0 pt-px pr-[2px] text-right whitespace-nowrap";
  const handle = '<span class="absolute top-0 -right-[3px] size-1 bg-[#0000c8]"></span>';
  let body = "";
  for (let r = 1; r <= 54; r++) {
    if (r === 8) continue;
    body += `<tr><th scope="row" class="${headCell}">${r}</th>`;
    for (let c = 0; c < 26; c++) {
      const text = (data[r] && data[r][c]) || "";
      const inRange = (r === 9 || r === 54) && (c === 7 || c === 8);
      const cls = r === 7 ? frozen : inRange ? range : c === 0 && r === 4 ? left : c === 0 && r > 8 ? right : plain;
      body += `<td class="${cls}">${text}${inRange && r === 9 ? handle : ""}</td>`;
    }
    body += "</tr>";
  }
  document.getElementById("rows").innerHTML = body;

  /* Humidity series: 115 readings, zero between the descent to 46 and the climb from 100 */
  const start = [44.28, 38.5, 36, 33.8, 32, 31.4, 30.3, 29.5, 29.1, 28.6, 27.9, 27.5, 26.5, 24.8, 23.2, 22.3, 21.6, 20.4, 19.8, 19.2, 18.5, 17.6, 16.4, 8.8, 7.6, 7.1, 7.1, 6.7, 6.4, 6.2, 5.6, 4.8, 4.3, 3.9, 3.3, 2.7, 2.2, 1.8, 1.4, 1, .8, .5, .3, .2, .1];
  const end = [.2, 1.6, 4.2, 8.5, 15, 23.5, 34, 44.5, 57, 66.7, 75.7, 81.3, 85.8, 88.5, 92, 41.4];
  const series = start.concat(Array(54).fill(0), end);
  const x0 = 81.5, x1 = 1516.5, y0 = 680.5, unit = 5.6, step = (x1 - x0) / 115;
  let s = `<rect x=".5" y=".5" width="1667" height="754" fill="#fff" stroke="#000"/>`;
  s += `<rect x="${x0}" y="120.5" width="${x1 - x0}" height="560" fill="#c0c0c0" stroke="#808080"/>`;
  s += `<text x="834" y="58" text-anchor="middle" font-size="30" font-weight="700">Humidity</text>`;
  for (let v = 0; v <= 100; v += 10) {
    const y = y0 - v * unit;
    if (v > 0 && v < 100) s += `<path stroke="#000" d="M82 ${y}H1516"/>`;
    s += `<path stroke="#000" d="M73 ${y}H82"/><text x="61" y="${y + 9}" text-anchor="end">${v}</text>`;
  }
  for (let i = 0; i <= 115; i++) s += `<path stroke="#000" d="M${Math.round(x0 + i * step - .5) + .5} 681v8"/>`;
  for (let i = 1; i <= 111; i += 5) s += `<text x="${Math.round(x0 + (i - .5) * step) - 1}" y="727" text-anchor="middle">${i}</text>`;
  s += `<polyline fill="none" stroke="#000080" shape-rendering="crispEdges" points="${series.map((v, i) => (x0 + (i + .5) * step).toFixed(1) + "," + (y0 - v * unit).toFixed(1)).join(" ")}"/>`;
  s += `<path fill="none" stroke="#000" d="M81.500 120V680.500H1517"/>`;
  s += `<rect x="1527.500" y="381.500" width="131" height="37" fill="#fff" stroke="#000"/><path stroke="#000080" d="M1535 402.500h24"/><text x="1566" y="411">Series1</text>`;
  s += `<rect x="821.500" y="303.500" width="56" height="18" fill="#ffffe1" stroke="#555"/><text x="849.500" y="316" text-anchor="middle" font-family="Open Sans, Noto Sans, sans-serif" font-size="11">Plot Area</text>`;
  for (const [x, y] of [[1, 1], [831, 1], [1661, 1], [1, 374], [1661, 374], [1, 748], [831, 748], [1661, 748]]) s += `<rect x="${x}" y="${y}" width="6" height="6"/>`;
  document.getElementById("chart").innerHTML = s;
</script>
</body>
</html>
